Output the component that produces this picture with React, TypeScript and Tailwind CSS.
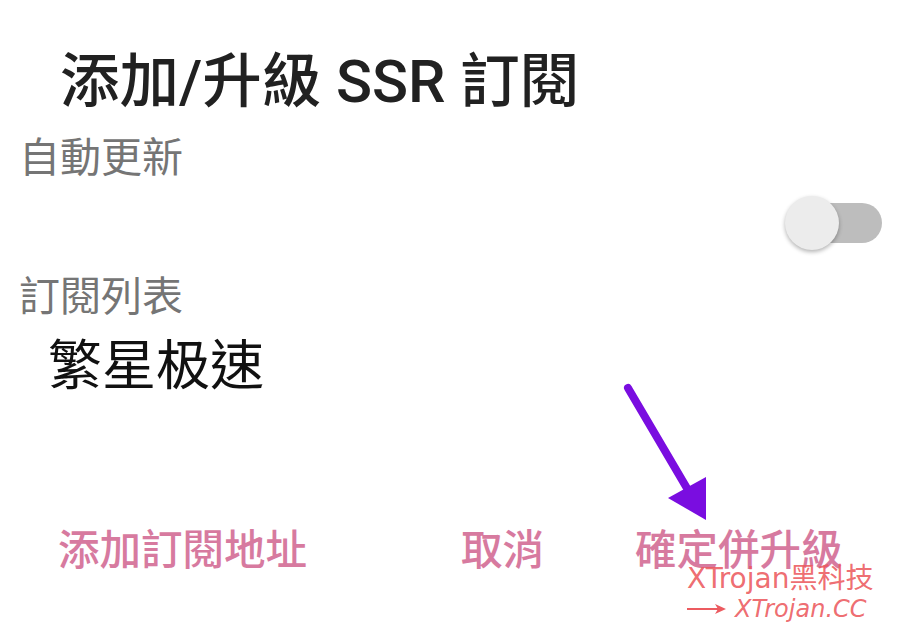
import React from "react";

export default function App() {
  return (
    <div
      className="relative w-[897px] h-[630px] overflow-hidden bg-white"
      style={{ fontFamily: "Roboto, 'Noto Sans CJK TC', sans-serif" }}
    >
      <div className="flex flex-col">
        <div className="pl-[60px] pt-[53px] text-[59.5px] leading-none font-medium text-[#212121]">
          添加/升級 SSR 訂閱
        </div>
        <div className="pl-[19px] mt-[25px] text-[41px] leading-none text-[#757575]">
          自動更新
        </div>
        <div className="flex justify-end pr-[15px] mt-[16px] h-[56px] items-center">
          <div className="relative w-[97px] h-[56px] flex items-center">
            <div className="absolute right-0 w-[82px] h-[40px] rounded-full bg-[#bdbdbd]" />
            <div className="absolute left-0 w-[54px] h-[54px] rounded-full bg-[#ececec] shadow-[0_2px_4px_rgba(0,0,0,0.3)]" />
          </div>
        </div>
        <div className="pl-[19px] mt-[26px] text-[41px] leading-none text-[#757575]">
          訂閱列表
        </div>
        <div className="pl-[48px] mt-[22px] text-[54px] leading-none text-[#111111]">
          繁星极速
        </div>
        <div className="flex items-center mt-[136px] text-[41.5px] leading-none font-medium text-[#d77a9f]">
          <div className="pl-[58px] w-[461px]">添加訂閱地址</div>
          <div className="w-[174px]">取消</div>
          <div>確定併升級</div>
        </div>
      </div>

      <svg className="absolute left-0 top-0" width="897" height="630" viewBox="0 0 897 630">
        <line x1="628" y1="388" x2="688" y2="490" stroke="#7a0de0" strokeWidth="8" strokeLinecap="round" />
        <polygon points="668,498 706,477 706,520" fill="#7a0de0" />
      </svg>

      <div
        className="absolute left-[687px] top-[565px] text-[28px] leading-none text-[#ec5b60]/90"
        style={{ fontFamily: "'DejaVu Sans', 'Noto Sans CJK SC', sans-serif" }}
      >
        XTrojan黑科技
      </div>
      <div
        className="absolute left-[687px] top-[597px] flex items-center gap-[8px] text-[24px] leading-none text-[#ec5b60]/90"
        style={{ fontFamily: "'DejaVu Sans', sans-serif" }}
      >
        <svg width="40" height="14" viewBox="0 0 40 14">
          <line x1="0" y1="7" x2="36" y2="7" stroke="#ec5b60" strokeWidth="2" />
          <polygon points="28,2 39,7 28,12 31,7" fill="#ec5b60" />
        </svg>
        <span className="italic">XTrojan.CC</span>
      </div>
    </div>
  );
}
